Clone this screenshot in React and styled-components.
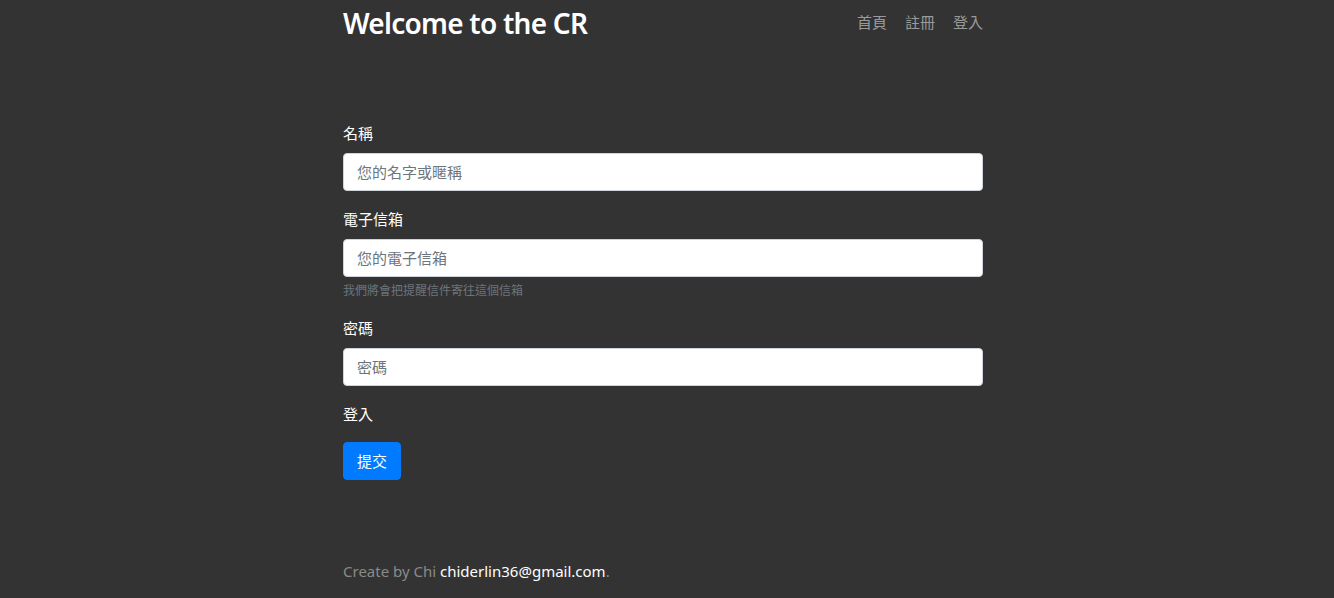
import React from "react";
import styled, { createGlobalStyle } from "styled-components";

const GlobalStyle = createGlobalStyle`
  * {
    box-sizing: border-box;
  }
  body {
    margin: 0;
    background: #333333;
    color: #ffffff;
    font-family: "Noto Sans", "Noto Sans CJK TC", sans-serif;
    font-size: 16px;
    line-height: 1.5;
  }
`;

const Viewport = styled.div`
  padding-right: 8px;
`;

const Page = styled.div`
  width: 640px;
  margin: 0 auto;
  min-height: 598px;
  display: flex;
  flex-direction: column;
`;

const Header = styled.header`
  display: flex;
  justify-content: space-between;
  align-items: flex-start;
  padding-top: 7px;
`;

const Title = styled.h3`
  margin: 0;
  font-size: 28px;
  font-weight: 600;
  line-height: 1.2;
  letter-spacing: -0.75px;
`;

const Nav = styled.nav`
  display: flex;
  gap: 18px;
  padding-top: 4px;
`;

const NavLink = styled.a`
  color: #9a9a9a;
  font-size: 15px;
  text-decoration: none;
  cursor: pointer;
`;

const Form = styled.form`
  margin-top: 80px;
  display: flex;
  flex-direction: column;
`;

const Group = styled.div`
  margin-bottom: 16px;
`;

const Label = styled.label`
  display: block;
  margin-bottom: ${({ $flush }) => ($flush ? "0" : "8px")};
  font-size: 15px;
  line-height: 24px;
`;

const Input = styled.input`
  display: block;
  width: 100%;
  height: 38px;
  padding: 6px 13px;
  font-family: inherit;
  font-size: 15px;
  color: #495057;
  background: #ffffff;
  border: 1px solid #ced4da;
  border-radius: 4px;
  outline: none;

  &::placeholder {
    color: #6c757d;
  }
`;

const Hint = styled.small`
  display: block;
  margin-top: 4px;
  font-size: 12px;
  line-height: 19px;
  color: #6c757d;
`;

const SubmitButton = styled.button`
  align-self: flex-start;
  height: 38px;
  padding: 6px 13px;
  font-family: inherit;
  font-size: 15px;
  color: #ffffff;
  background: #007bff;
  border: 1px solid #007bff;
  border-radius: 4px;
  cursor: pointer;
`;

const Footer = styled.footer`
  margin-top: 79px;
  font-size: 15px;
  line-height: 24px;
  color: #8a8a8a;
`;

const Mail = styled.a`
  color: #ffffff;
  text-decoration: none;
`;

export default function App() {
  return (
    <>
      <GlobalStyle />
      <Viewport>
        <Page>
          <Header>
            <Title>Welcome to the CR</Title>
            <Nav>
              <NavLink>首頁</NavLink>
              <NavLink>註冊</NavLink>
              <NavLink>登入</NavLink>
            </Nav>
          </Header>

          <Form onSubmit={(e) => e.preventDefault()}>
            <Group>
              <Label htmlFor="name">名稱</Label>
              <Input id="name" type="text" placeholder="您的名字或暱稱" />
            </Group>
            <Group>
              <Label htmlFor="email">電子信箱</Label>
              <Input id="email" type="email" placeholder="您的電子信箱" />
              <Hint>我們將會把提醒信件寄往這個信箱</Hint>
            </Group>
            <Group>
              <Label htmlFor="password">密碼</Label>
              <Input id="password" type="password" placeholder="密碼" />
            </Group>
            <Group>
              <Label $flush>登入</Label>
            </Group>
            <SubmitButton type="submit">提交</SubmitButton>
          </Form>

          <Footer>
            Create by Chi <Mail>chiderlin36@gmail.com</Mail>.
          </Footer>
        </Page>
      </Viewport>
    </>
  );
}
